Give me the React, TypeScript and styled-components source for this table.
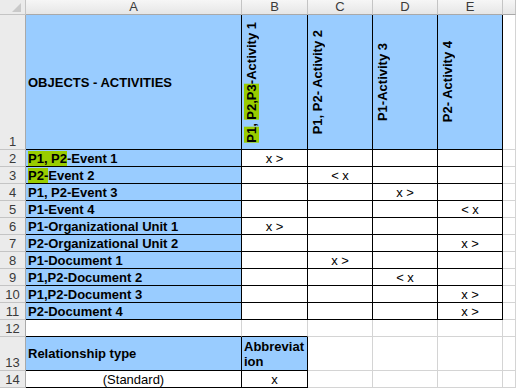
import styled, { createGlobalStyle } from "styled-components";

const colors = {
  blue: "#99ccff",
  green: "#99cc00",
  header: "#ebebeb",
  headerLine: "#c4c4c4",
  headerText: "#3a3a3a",
  grid: "#d4d4d4",
  black: "#000000",
};

type Mark = "x >" | "< x";

const objects: { label: string; hl?: string; col: number; mark: Mark }[] = [
  { label: "P1, P2-Event 1", hl: "P1, P2", col: 1, mark: "x >" },
  { label: "P2-Event 2", hl: "P2-", col: 2, mark: "< x" },
  { label: "P1, P2-Event 3", col: 3, mark: "x >" },
  { label: "P1-Event 4", col: 4, mark: "< x" },
  { label: "P1-Organizational Unit 1", col: 1, mark: "x >" },
  { label: "P2-Organizational Unit 2", col: 4, mark: "x >" },
  { label: "P1-Document 1", col: 2, mark: "x >" },
  { label: "P1,P2-Document 2", col: 3, mark: "< x" },
  { label: "P1,P2-Document 3", col: 4, mark: "x >" },
  { label: "P2-Document 4", col: 4, mark: "x >" },
];

const letters = ["A", "B", "C", "D", "E", ""];

// rows 1..11 A-E, rows 13..14 A-B carry black borders
const boxed = (r: number, c: number) =>
  (r >= 1 && r <= 11 && c >= 0 && c <= 4) || ((r === 13 || r === 14) && c >= 0 && c <= 1);

export default function App() {
  const cell = (r: number, c: number) => ({
    $rb: boxed(r, c) || boxed(r, c + 1),
    $bb: boxed(r, c) || boxed(r + 1, c),
  });

  return (
    <>
      <GlobalStyle />
      <Sheet>
        <Corner>
          <svg width="26" height="15" viewBox="0 0 26 15">
            <polygon points="21,3 21,12 12,12" fill="#c9c9c9" />
          </svg>
        </Corner>
        {letters.map((l, i) => (
          <ColHeader key={i}>{l}</ColHeader>
        ))}

        {/* row 1 */}
        <RowHeader>1</RowHeader>
        <Cell {...cell(1, 0)} $fill $bold>
          OBJECTS - ACTIVITIES
        </Cell>
        <Cell {...cell(1, 1)} $fill $bold>
          <VerticalLabel>
            <Hl>P1</Hl>, <Hl>P2,P3</Hl>-Activity 1
          </VerticalLabel>
        </Cell>
        <Cell {...cell(1, 2)} $fill $bold>
          <VerticalLabel>P1, P2- Activity 2</VerticalLabel>
        </Cell>
        <Cell {...cell(1, 3)} $fill $bold>
          <VerticalLabel>P1-Activity 3</VerticalLabel>
        </Cell>
        <Cell {...cell(1, 4)} $fill $bold>
          <VerticalLabel>P2- Activity 4</VerticalLabel>
        </Cell>
        <Cell {...cell(1, 5)} />

        {objects.map((o, i) => {
          const r = i + 2;
          const rest = o.hl ? o.label.slice(o.hl.length) : o.label;
          return [
            <RowHeader key={`h${r}`}>{r}</RowHeader>,
            <Cell key={`a${r}`} {...cell(r, 0)} $fill $bold>
              {o.hl && <Hl>{o.hl}</Hl>}
              {rest}
            </Cell>,
            ...[1, 2, 3, 4, 5].map((c) => (
              <Cell key={`${r}-${c}`} {...cell(r, c)} $center>
                {o.col === c ? o.mark : ""}
              </Cell>
            )),
          ];
        })}

        <RowHeader>12</RowHeader>
        {[0, 1, 2, 3, 4, 5].map((c) => (
          <Cell key={`12-${c}`} {...cell(12, c)} />
        ))}

        <RowHeader>13</RowHeader>
        <Cell {...cell(13, 0)} $fill $bold>
          Relationship type
        </Cell>
        <Cell {...cell(13, 1)} $fill $bold $wrap>
          Abbreviation
        </Cell>
        {[2, 3, 4, 5].map((c) => (
          <Cell key={`13-${c}`} {...cell(13, c)} />
        ))}

        <RowHeader>14</RowHeader>
        <Cell {...cell(14, 0)} $center>
          (Standard)
        </Cell>
        <Cell {...cell(14, 1)} $center>
          x
        </Cell>
        {[2, 3, 4, 5].map((c) => (
          <Cell key={`14-${c}`} {...cell(14, c)} />
        ))}
      </Sheet>
    </>
  );
}

const GlobalStyle = createGlobalStyle`
  body {
    margin: 0;
    background: #fff;
    overflow: hidden;
    font-family: "Liberation Sans", Arial, sans-serif;
  }
`;

const Sheet = styled.div`
  display: grid;
  grid-template-columns: 26px 216px 66px 65px 65px 65px 1fr;
  grid-template-rows: 15px 135px repeat(11, 17px) 34px 17px;
  width: 516px;
  height: 388px;
  overflow: hidden;
  font-size: 13px;
  color: #000;

  & > * {
    box-sizing: border-box;
    min-width: 0;
    overflow: hidden;
  }
`;

const Corner = styled.div`
  background: ${colors.header};
  border-right: 1px solid ${colors.headerLine};
  border-bottom: 1px solid ${colors.headerLine};
`;

const ColHeader = styled.div`
  background: linear-gradient(#f6f6f6, #e6e6e6);
  border-right: 1px solid ${colors.headerLine};
  border-bottom: 1px solid #a9a9a9;
  color: ${colors.headerText};
  font-size: 13px;
  line-height: 14px;
  text-align: center;
`;

const RowHeader = styled.div`
  display: flex;
  align-items: flex-end;
  justify-content: center;
  background: ${colors.header};
  border-right: 1px solid #a9a9a9;
  border-bottom: 1px solid ${colors.headerLine};
  color: ${colors.headerText};
  font-size: 13px;
  line-height: 15px;
  padding-bottom: 0;
`;

const Cell = styled.div<{
  $rb?: boolean;
  $bb?: boolean;
  $fill?: boolean;
  $bold?: boolean;
  $center?: boolean;
  $wrap?: boolean;
}>`
  display: flex;
  align-items: center;
  justify-content: ${(p) => (p.$center ? "center" : "flex-start")};
  padding: 0 2px;
  background: ${(p) => (p.$fill ? colors.blue : "#fff")};
  border-right: 1px solid ${(p) => (p.$rb ? colors.black : colors.grid)};
  border-bottom: 1px solid ${(p) => (p.$bb ? colors.black : colors.grid)};
  font-weight: ${(p) => (p.$bold ? 700 : 400)};
  line-height: 15px;
  white-space: ${(p) => (p.$wrap ? "normal" : "nowrap")};
  word-break: ${(p) => (p.$wrap ? "break-all" : "normal")};
`;

const VerticalLabel = styled.span`
  writing-mode: vertical-rl;
  transform: rotate(180deg);
  white-space: nowrap;
  line-height: 15px;
`;

const Hl = styled.span`
  background: ${colors.green};
`;
